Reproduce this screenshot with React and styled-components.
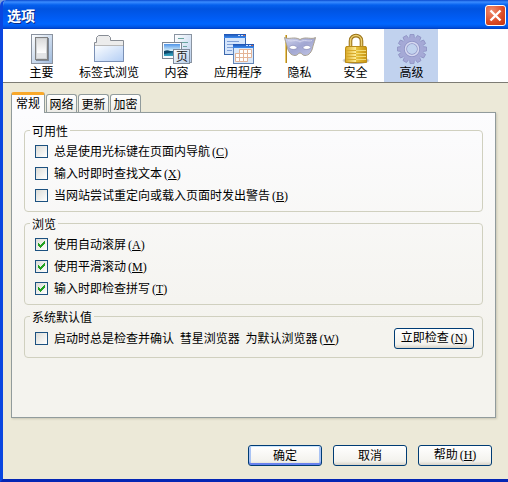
import React, { useState } from "react";

// Styled Components
import styled, { createGlobalStyle } from "styled-components";

const categories = [
  { id: "main", label: "主要", Icon: SwitchIcon },
  { id: "tabs", label: "标签式浏览", Icon: FolderIcon },
  { id: "content", label: "内容", Icon: ContentIcon },
  { id: "apps", label: "应用程序", Icon: WindowsIcon },
  { id: "privacy", label: "隐私", Icon: MaskIcon },
  { id: "security", label: "安全", Icon: LockIcon },
  { id: "advanced", label: "高级", Icon: GearIcon },
];

const tabs = ["常规", "网络", "更新", "加密"];

export default function App() {
  const [category, setCategory] = useState("advanced");
  const [tab, setTab] = useState("常规");

  return (
    <>
      <GlobalStyle />
      <Window>
        <TitleBar>
          <Title>选项</Title>
          <CloseButton type="button" aria-label="关闭">
            <svg width="13" height="13" viewBox="0 0 13 13">
              <path d="M1.500 1.500L11.500 11.500M11.500 1.500L1.500 11.500" stroke="#fff" strokeWidth="2.4" />
            </svg>
          </CloseButton>
        </TitleBar>
        <Toolbar>
          {categories.map(({ id, label, Icon }) => (
            <ToolButton
              key={id}
              type="button"
              $active={category === id}
              onClick={() => setCategory(id)}
            >
              <Icon />
              {label}
            </ToolButton>
          ))}
        </Toolbar>
        <Content>
          <TabList role="tablist">
            {tabs.map((name) => (
              <Tab
                key={name}
                type="button"
                role="tab"
                aria-selected={tab === name}
                $active={tab === name}
                onClick={() => setTab(name)}
              >
                {name}
              </Tab>
            ))}
          </TabList>
          <Panel>
            <Group>
              <legend>可用性</legend>
              <Option accel="C">总是使用光标键在页面内导航</Option>
              <Option accel="X">输入时即时查找文本</Option>
              <Option accel="B">当网站尝试重定向或载入页面时发出警告</Option>
            </Group>
            <Group>
              <legend>浏览</legend>
              <Option accel="A" checked>使用自动滚屏</Option>
              <Option accel="M" checked>使用平滑滚动</Option>
              <Option accel="T" checked>输入时即检查拼写</Option>
            </Group>
            <Group>
              <legend>系统默认值</legend>
              <SplitRow>
                <Option accel="W">
                  启动时总是检查并确认 <Product>彗星浏览器</Product> 为默认浏览器
                </Option>
                <Button type="button" $wide>
                  立即检查<Accel letter="N" />
                </Button>
              </SplitRow>
            </Group>
          </Panel>
        </Content>
        <Footer>
          <Button type="button" $primary>确定</Button>
          <Button type="button">取消</Button>
          <Button type="button">
            帮助<Accel letter="H" />
          </Button>
        </Footer>
      </Window>
    </>
  );
}

function Option({ accel, checked, children }) {
  return (
    <OptionLabel>
      <Checkbox type="checkbox" defaultChecked={checked} />
      <span>
        {children}
        <Accel letter={accel} />
      </span>
    </OptionLabel>
  );
}

function Accel({ letter }) {
  return (
    <AccelText>
      (<u>{letter}</u>)
    </AccelText>
  );
}

// Icons
function SwitchIcon() {
  return (
    <svg width="32" height="32" viewBox="0 0 32 32">
      <defs>
        <linearGradient id="plate" x1="0" y1="0" x2="1" y2="1">
          <stop offset="0" stopColor="#fff" />
          <stop offset="1" stopColor="#9db9dc" />
        </linearGradient>
        <linearGradient id="rocker" x1="0" y1="0" x2="0" y2="1">
          <stop offset="0" stopColor="#dcdcdc" />
          <stop offset="1" stopColor="#fff" />
        </linearGradient>
      </defs>
      <rect x="5.5" y="1.5" width="21" height="29" fill="url(#plate)" stroke="#8b939f" />
      <path d="M10 5H23V28H10Z" fill="#7b8797" />
      <rect x="9.500" y="4.500" width="12" height="22" fill="#cfd2d5" stroke="#808080" />
      <path d="M11 6H20V20H11Z" fill="url(#rocker)" />
      <path d="M11 20H20V25H11Z" fill="#e3e4e6" />
    </svg>
  );
}

function FolderIcon() {
  return (
    <svg width="32" height="32" viewBox="0 0 32 32">
      <defs>
        <linearGradient id="folder" x1="0" y1="0" x2="1" y2="1">
          <stop offset="0" stopColor="#fbfdff" />
          <stop offset="1" stopColor="#b5cff5" />
        </linearGradient>
      </defs>
      <path d="M1.5 28.5V9.5H3.5V4.5L5.5 2.5H15.5L17.5 4.5V7.5H30.5V28.5Z" fill="#ececec" stroke="#888d95" />
      <path d="M2 12.5H30V28H2Z" fill="url(#folder)" />
      <path d="M2 12.5H30" stroke="#b9b9b9" />
      <path d="M1.5 13V28.5H30.5V13" fill="none" stroke="#7a90b5" />
    </svg>
  );
}

function ContentIcon() {
  return (
    <svg width="32" height="32" viewBox="0 0 32 32">
      <defs>
        <linearGradient id="sheet" x1="0" y1="0" x2="1" y2="1">
          <stop offset="0" stopColor="#fff" />
          <stop offset="1" stopColor="#b7cdeb" />
        </linearGradient>
        <linearGradient id="photo" x1="0" y1="0" x2="0" y2="1">
          <stop offset="0" stopColor="#4f94e8" />
          <stop offset=".55" stopColor="#d7f1fb" />
          <stop offset=".6" stopColor="#15618d" />
          <stop offset="1" stopColor="#36a8c4" />
        </linearGradient>
      </defs>
      <rect x="13.5" y="1.5" width="17" height="28" fill="url(#sheet)" stroke="#8a94a1" />
      <path d="M17 5.5H23M17 9.5H27M22 13.5H26" stroke="#69a49f" />
      <rect x="1.5" y="9.5" width="19" height="16" fill="#f7fbff" stroke="#7e8793" />
      <rect x="3" y="11" width="16" height="12" fill="url(#photo)" />
      <path d="M3 18C7 16 9 18 12 19L3 21Z" fill="#0d4668" />
      <rect x="12.5" y="16.5" width="16" height="14" fill="url(#sheet)" stroke="#808b9b" />
      <text x="21" y="28" textAnchor="middle" fontSize="12" fill="#222">页</text>
    </svg>
  );
}

function WindowsIcon() {
  return (
    <svg width="32" height="32" viewBox="0 0 32 32">
      <defs>
        <linearGradient id="caption" x1="0" y1="0" x2="0" y2="1">
          <stop offset="0" stopColor="#1c4fae" />
          <stop offset="1" stopColor="#3c8cf0" />
        </linearGradient>
      </defs>
      <rect x="2.5" y="1.5" width="21" height="20" fill="#d5e5fb" stroke="#3c68ad" />
      <rect x="2" y="1" width="22" height="4" fill="url(#caption)" />
      <path d="M16 2.5H18M19 2.5H21" stroke="#cfe2ff" />
      <path d="M21.5 2.5H23" stroke="#e3683c" />
      <path d="M5 8.5H17M5 11.5H14M5 14.5H11M5 17.5H10" stroke="#7f9fd6" />
      <rect x="11.5" y="11.5" width="20" height="19" fill="#dce9f9" stroke="#6385b7" />
      <rect x="11" y="11" width="21" height="4" fill="url(#caption)" />
      <path d="M24 12.5H26M27 12.5H29" stroke="#cfe2ff" />
      <path d="M29.5 12.5H31" stroke="#e3683c" />
      <path
        d="M17.5 16.5H29.5V24.5H25.5V28.5H13.5V20.5H17.5ZM13.5 20.5H29.5M13.5 24.5H29.5M17.5 16.5V28.5M21.5 16.5V28.5M25.5 16.5V28.5"
        fill="#fff"
        stroke="#e3b497"
      />
    </svg>
  );
}

function MaskIcon() {
  return (
    <svg width="32" height="32" viewBox="0 0 32 32">
      <defs>
        <linearGradient id="mask" x1="0" y1="0" x2="1" y2="1">
          <stop offset="0" stopColor="#d0d4ee" />
          <stop offset=".5" stopColor="#a2a7d2" />
          <stop offset="1" stopColor="#c3c6e6" />
        </linearGradient>
      </defs>
      <path d="M2 2V30" stroke="#b88a22" strokeWidth="2" />
      <path d="M1.5 2V30" stroke="#e9ca68" />
      <path
        d="M.5 4.5C5 7 10 3 16 6.5C22 3 27 7 31.5 4.5C31 7 30 10 29 13C28 19 25 22.500 21 22.500C18 22.500 18 20 16 20C14 20 14 22.500 11 22.500C7 22.500 4 19 3 13C2 10 1 7 .5 4.5Z"
        fill="url(#mask)"
        stroke="#a8a090"
      />
      <path d="M5 14.500C7 11.500 11 11.500 13.500 15C11 17 7 17 5 14.500ZM18.500 15C21 11.500 25 11.500 27 14.500C25 17 21 17 18.500 15Z" fill="#fff" stroke="#8387b4" strokeWidth=".7" />
      <path d="M4 7.500C8 9 12 6 16 9C20 6 24 9 28 7.500" fill="none" stroke="#dfe1f4" strokeWidth=".8" />
    </svg>
  );
}

function LockIcon() {
  return (
    <svg width="32" height="32" viewBox="0 0 32 32">
      <defs>
        <linearGradient id="brassLeft" x1="0" y1="0" x2="1" y2="0">
          <stop offset="0" stopColor="#d8a51e" />
          <stop offset="1" stopColor="#ffef9c" />
        </linearGradient>
        <linearGradient id="brassRight" x1="0" y1="0" x2="1" y2="0">
          <stop offset="0" stopColor="#e9c43f" />
          <stop offset="1" stopColor="#c6920f" />
        </linearGradient>
        <radialGradient id="lockShadow">
          <stop offset=".6" stopColor="#6e6c68" />
          <stop offset="1" stopColor="#6e6c68" stopOpacity="0" />
        </radialGradient>
      </defs>
      <ellipse cx="16" cy="27.500" rx="14" ry="4" fill="url(#lockShadow)" />
      <path d="M10.500 14V8C10.500 .8 21.500 .8 21.500 8V14" fill="none" stroke="#9c7418" strokeWidth="3.6" />
      <path d="M10.500 14V8C10.500 .8 21.500 .8 21.500 8V14" fill="none" stroke="#ecd174" strokeWidth="1.5" />
      <path d="M6 13H16V29H5V15Z" fill="url(#brassLeft)" />
      <path d="M16 13H26L27 15V29H16Z" fill="url(#brassRight)" />
      <path d="M6 17.500H16M6 20.500H16M6 23.500H16M6 26.500H16" stroke="#d8aa2c" />
      <path d="M16 17.500H26M16 20.500H26M16 23.500H26M16 26.500H26" stroke="#f3dc76" />
      <path d="M6.500 13.500H25.500L26.500 15.500V29.500H5.500V15.500Z" fill="none" stroke="#b98c1c" />
    </svg>
  );
}

function GearIcon() {
  const teeth = Array.from({ length: 12 }, (_, i) => i * 30);
  return (
    <svg width="32" height="32" viewBox="0 0 32 32">
      <g fill="#a5a9d6" stroke="#8c91c2" strokeWidth=".8">
        {teeth.map((angle) => (
          <path key={angle} d="M13.500 6L14 1.500H18L18.500 6Z" transform={`rotate(${angle} 16 16)`} />
        ))}
      </g>
      <circle cx="16" cy="16" r="11.5" fill="#a5a9d6" />
      <circle cx="16" cy="16" r="6.5" fill="#c1d2ee" stroke="#8d92c4" strokeWidth="3" />
      <circle cx="16" cy="16" r="6.5" fill="none" stroke="#d5d8f0" strokeWidth="1.6" />
    </svg>
  );
}

const GlobalStyle = createGlobalStyle`
  * {
    box-sizing: border-box;
  }
  body {
    margin: 0;
    background: #7d9fdc;
  }
  body, button, input {
    font-family: "Noto Sans CJK SC", sans-serif;
    font-size: 12px;
    line-height: 14px;
    color: #000;
  }
`;

const Window = styled.main`
  display: flex;
  flex-direction: column;
  min-height: 100vh;
  border-left: 3px solid #0a46e0;
  border-bottom: 3px solid #0426b4;
  border-top-left-radius: 6px;
  background: #ece9d8;
  overflow: hidden;
`;

const TitleBar = styled.header`
  display: flex;
  justify-content: space-between;
  align-items: center;
  height: 29px;
  margin-left: -3px;
  padding: 1px 2px 0 7px;
  background: linear-gradient(
    #0a4ad0 0,
    #3a8cff 2px,
    #0560ee 5px,
    #0053e0 9px,
    #005cf4 18px,
    #0066ff 24px,
    #0055e4 27px,
    #003cc0 29px
  );
`;

const Title = styled.h1`
  margin: 0;
  font-size: 14px;
  line-height: 20px;
  font-weight: 700;
  color: #fff;
  text-shadow: 1px 1px 0 #0b2a85;
`;

const CloseButton = styled.button`
  display: grid;
  place-items: center;
  width: 21px;
  height: 21px;
  padding: 0;
  border: 1px solid #fff;
  border-radius: 3px;
  background: radial-gradient(circle at 30% 25%, #ee8d70, #dc4a24 60%, #c23412);
`;

const Toolbar = styled.nav`
  display: flex;
  gap: 2px;
  padding-left: 11px;
  border-bottom: 1px solid #7d7c74;
  background: #fff;
`;

const ToolButton = styled.button`
  display: flex;
  flex-direction: column;
  align-items: center;
  min-width: 54px;
  height: 53px;
  padding: 4px 8px 0 9px;
  border: 0;
  background: ${({ $active }) => ($active ? "#c1d2ee" : "transparent")};
  white-space: nowrap;
`;

const Content = styled.section`
  display: flex;
  flex: 1;
  flex-direction: column;
  padding: 9px 12px 0 8px;
`;

const TabList = styled.div`
  display: flex;
  align-items: flex-end;
  gap: 1px;
  height: 20px;
`;

const Tab = styled.button`
  width: ${({ $active }) => ($active ? "34px" : "31px")};
  height: ${({ $active }) => ($active ? "21px" : "18px")};
  margin-bottom: ${({ $active }) => ($active ? "-1px" : "0")};
  padding: ${({ $active }) => ($active ? "0 0 3px" : "0")};
  border: 1px solid #919b9c;
  border-top: ${({ $active }) => ($active ? "3px solid #f9a82a" : "1px solid #919b9c")};
  border-bottom: 0;
  border-radius: 3px 3px 0 0;
  background: ${({ $active }) => ($active ? "#fcfcfe" : "linear-gradient(#fff, #ecebe6)")};
  z-index: ${({ $active }) => ($active ? 1 : 0)};
`;

const Panel = styled.div`
  display: flex;
  flex: 1;
  flex-direction: column;
  gap: 5px;
  padding: 11px 12px;
  border: 1px solid #919b9c;
  background: linear-gradient(#fcfcfe, #f4f3ee 70%);
  box-shadow: 1px 1px 2px #c9c6b4;
`;

const Group = styled.fieldset`
  min-width: 0;
  margin: 0;
  padding: 3px 8px 5px 10px;
  border: 1px solid #d0d0bf;
  border-radius: 4px;
  legend {
    margin-left: -5px;
    padding: 0 2px;
    line-height: 13px;
  }
`;

const SplitRow = styled.div`
  display: flex;
  justify-content: space-between;
  align-items: center;
  padding: 1px 0 3px;
`;

const OptionLabel = styled.label`
  display: flex;
  align-items: center;
  gap: 6px;
  height: 22px;
  white-space: nowrap;
`;

const Checkbox = styled.input`
  appearance: none;
  flex: none;
  width: 13px;
  height: 13px;
  margin: 0;
  border: 1px solid #1c5180;
  background: linear-gradient(135deg, #dcdcd7, #fff);
  &:checked {
    background:
      linear-gradient(#21a121, #21a121) 2px 4px / 1px 3px,
      linear-gradient(#21a121, #21a121) 3px 5px / 1px 3px,
      linear-gradient(#21a121, #21a121) 4px 6px / 1px 3px,
      linear-gradient(#21a121, #21a121) 5px 5px / 1px 3px,
      linear-gradient(#21a121, #21a121) 6px 4px / 1px 3px,
      linear-gradient(#21a121, #21a121) 7px 3px / 1px 3px,
      linear-gradient(#21a121, #21a121) 8px 2px / 1px 3px,
      linear-gradient(135deg, #dcdcd7, #fff);
    background-repeat: no-repeat;
  }
`;

const Product = styled.span`
  margin: 0 3px;
`;

const AccelText = styled.span`
  margin-left: 2px;
  font-family: "Liberation Serif", serif;
  font-size: 12px;
`;

const Button = styled.button`
  width: ${({ $wide }) => ($wide ? "80px" : "74px")};
  height: 21px;
  padding: 0 0 2px;
  border: 1px solid #003c74;
  border-radius: 3px;
  background: linear-gradient(#fff, #f3f2ed 80%, #d8d3c8);
  box-shadow: ${({ $primary }) =>
    $primary ? "inset 0 1px 0 #cee7ff, inset 0 -2px 0 #6982ee, inset 2px 0 0 #a9c3f4, inset -2px 0 0 #a9c3f4" : "none"};
  white-space: nowrap;
`;

const Footer = styled.footer`
  display: flex;
  justify-content: flex-end;
  gap: 11px;
  padding: 27px 16px 13px;
`;
